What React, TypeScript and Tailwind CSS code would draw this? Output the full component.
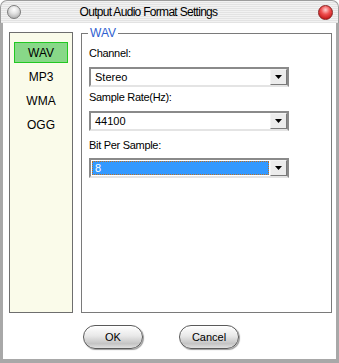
import React from "react";

const font = { fontFamily: '"Liberation Sans", Arial, sans-serif' };

function Combo({ value, focused }: { value: string; focused?: boolean }) {
  return (
    <div className="flex h-[20px] w-[200px] border-2 border-t-[#8a8a8a] border-l-[#8a8a8a] border-b-[#e4e4e4] border-r-[#8a8a8a] bg-white">
      <div className="flex flex-1 items-center p-[1px]">
        {focused ? (
          <div className="flex h-full w-full items-center border border-dotted border-[#c07020] bg-[#3399ff] pl-[2px] text-[11px] text-white">
            {value}
          </div>
        ) : (
          <div className="pl-[3px] text-[11px] text-black">{value}</div>
        )}
      </div>
      <div className="flex w-[17px] items-center justify-center border border-t-[#f4f4f4] border-l-[#f4f4f4] border-b-[#7a7a7a] border-r-[#7a7a7a] bg-[#ececec]">
        <svg width="7" height="4" viewBox="0 0 7 4">
          <path d="M0 0h7L3.5 4z" fill="#000" />
        </svg>
      </div>
    </div>
  );
}

function PillButton({ label }: { label: string }) {
  return (
    <button className="flex h-[24px] w-[60px] items-center justify-center rounded-full border border-[#5a5a5a] bg-[linear-gradient(180deg,#ffffff_0%,#e8e8e8_45%,#c4c4c4_80%,#e0e0e0_100%)] text-[11px] text-black shadow-[inset_0_1px_1px_#fff,1px_1px_1px_#9a9a9a]">
      {label}
    </button>
  );
}

export default function App() {
  const formats = ["WAV", "MP3", "WMA", "OGG"];
  return (
    <div className="flex h-[363px] w-[339px] flex-col bg-white" style={font}>
      {/* title bar */}
      <div className="flex h-[23px] items-center rounded-t-[7px] border border-b-0 border-[#9c9c9c] bg-[repeating-linear-gradient(180deg,#f2f2f2_0px,#f2f2f2_1px,#e3e3e3_1px,#e3e3e3_2px)]">
        <div className="ml-[6px] h-[14px] w-[14px] rounded-full border border-[#7c7c7c] bg-[radial-gradient(circle_at_50%_30%,#ffffff_0%,#e2e2e2_40%,#9c9c9c_100%)]" />
        <div className="flex-1 pr-[42px] text-center text-[12px] tracking-[-0.7px] text-black">
          Output Audio Format Settings
        </div>
        <div className="mr-[5px] h-[15px] w-[15px] rounded-full border border-[#8a2020] bg-[radial-gradient(circle_at_50%_30%,#ffd0d0_0%,#f05050_40%,#b00000_100%)]" />
      </div>

      {/* body */}
      <div className="flex flex-1 flex-col border-x-[3px] border-b-[4px] border-[#a8a8a8] bg-white">
        <div className="ml-[6px] mt-[9px] flex h-[281px] gap-[8px]">
          <div className="flex w-[64px] flex-col items-center gap-[3px] border border-[#6e6e6e] bg-[#fafbea] pt-[9px]">
            {formats.map((f, i) => (
              <div
                key={f}
                className={
                  i === 0
                    ? "flex h-[21px] w-[54px] items-center justify-center border border-[#22c822] bg-[#88d888] text-[12px] text-black"
                    : "flex h-[21px] w-[54px] items-center justify-center text-[12px] text-black"
                }
              >
                {f}
              </div>
            ))}
          </div>

          <div className="relative mt-[1px] w-[251px] border border-[#7a7a7a] px-[7px] pt-[12px]">
            <span className="absolute -top-[8px] left-[6px] bg-white px-[2px] text-[12px] leading-[14px] text-[#2f5fd0]">
              WAV
            </span>
            <div className="h-[14px] text-[11px] leading-[14px] tracking-[-0.3px] text-black">Channel:</div>
            <div className="mt-[7px]">
              <Combo value="Stereo" />
            </div>
            <div className="mt-[3px] h-[14px] text-[11px] leading-[14px] tracking-[-0.3px] text-black">Sample Rate(Hz):</div>
            <div className="mt-[7px]">
              <Combo value="44100" />
            </div>
            <div className="mt-[7px] h-[14px] text-[11px] leading-[14px] tracking-[-0.3px] text-black">Bit Per Sample:</div>
            <div className="mt-[6px]">
              <Combo value="8" focused />
            </div>
          </div>
        </div>

        <div className="mt-[12px] flex gap-[36px] pl-[80px]">
          <PillButton label="OK" />
          <PillButton label="Cancel" />
        </div>
      </div>
    </div>
  );
}
